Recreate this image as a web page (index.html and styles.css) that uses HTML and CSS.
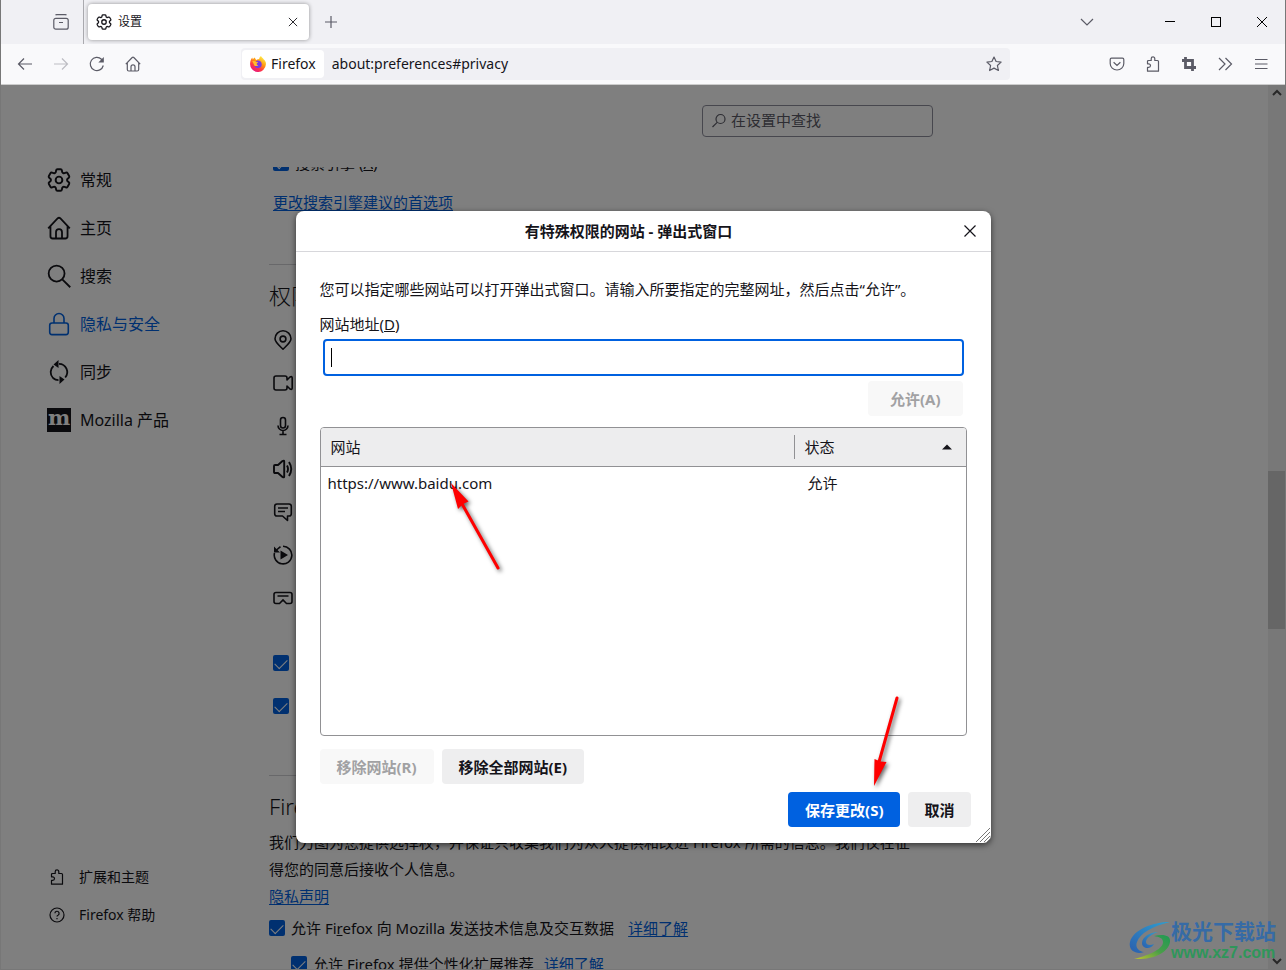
FILE: index.html
```html
<!DOCTYPE html>
<html lang="zh-CN">
<head>
<meta charset="utf-8">
<title>设置</title>
<link rel="stylesheet" href="styles.css">
</head>
<body>
<svg class="defs" aria-hidden="true">
  <symbol id="gear" viewBox="2 2 20 20"><path d="M9.594 3.94c.09-.542.56-.94 1.11-.94h2.593c.55 0 1.02.398 1.11.94l.213 1.281c.063.374.313.686.645.87.074.04.147.083.22.127.325.196.72.257 1.075.124l1.217-.456a1.125 1.125 0 0 1 1.37.49l1.296 2.247a1.125 1.125 0 0 1-.26 1.431l-1.003.827c-.293.241-.438.613-.43.992a7.723 7.723 0 0 1 0 .255c-.008.378.137.75.43.991l1.004.827c.424.35.534.955.26 1.43l-1.298 2.247a1.125 1.125 0 0 1-1.369.491l-1.217-.456c-.355-.133-.75-.072-1.076.124a6.47 6.47 0 0 1-.22.128c-.331.183-.581.495-.644.869l-.213 1.281c-.09.543-.56.94-1.11.94h-2.594c-.55 0-1.019-.398-1.11-.94l-.213-1.281c-.062-.374-.312-.686-.644-.87a6.52 6.52 0 0 1-.22-.127c-.325-.196-.72-.257-1.076-.124l-1.217.456a1.125 1.125 0 0 1-1.369-.49l-1.297-2.247a1.125 1.125 0 0 1 .26-1.431l1.004-.827c.292-.24.437-.613.43-.991a6.932 6.932 0 0 1 0-.255c.007-.38-.138-.751-.43-.992l-1.004-.827a1.125 1.125 0 0 1-.26-1.43l1.297-2.247a1.125 1.125 0 0 1 1.37-.491l1.216.456c.356.133.751.072 1.076-.124.072-.044.146-.086.22-.128.332-.183.582-.495.644-.869l.214-1.28Z" stroke-width="1.6"/><circle cx="12" cy="12" r="2.8" stroke-width="1.6"/></symbol>
  <symbol id="home" viewBox="0 0 16 16"><path d="M.8 8.2 7.2 1.500q.8-.7 1.600 0l6.400 6.700M2.300 7v6.500q0 1.500 1.500 1.500h8.400q1.500 0 1.500-1.500V7M6 15v-4.200a2 2 0 0 1 4 0V15"/></symbol>
  <symbol id="puzzle" viewBox="0 0 16 16"><path d="M2.500 15.200h11V5.500q0-1-1-1H9.800V2.700a1.800 1.800 0 0 0-3.600 0v1.800H3.500q-1 0-1 1v2.300h1.200a1.700 1.700 0 0 1 0 3.600H2.500z" stroke-linejoin="round"/></symbol>
  <symbol id="cross" viewBox="0 0 16 16"><path d="M2.500 2.500l11 11M13.500 2.500l-11 11"/></symbol>
  <symbol id="chev" viewBox="0 0 16 16"><path d="M2 5l6 6 6-6"/></symbol>
</svg>

<header class="titlebar">
  <button class="tool view" aria-label="Firefox View"><svg viewBox="0 0 16 16"><rect x=".8" y="4.300" width="14.400" height="10.900" rx="2"/><path d="M2.600 1.300q.3-.7 1-.7h8.800q.7 0 1 .7M6 8.500h4"/></svg></button>
  <div class="tab"><svg class="ink"><use href="#gear"/></svg><span class="tab-title">设置</span><button class="tab-close ink" aria-label="关闭标签页"><svg><use href="#cross"/></svg></button></div>
  <button class="tool" aria-label="新建标签页"><svg viewBox="0 0 16 16"><path d="M8 2v12M2 8h12"/></svg></button>
  <span class="grow"></span>
  <button class="tool tabs-list" aria-label="列出标签页"><svg><use href="#chev"/></svg></button>
  <button class="win" aria-label="最小化"><svg viewBox="0 0 12 12"><path d="M1 5.500h10"/></svg></button>
  <button class="win" aria-label="最大化"><svg viewBox="0 0 12 12"><rect x="1.500" y="1.500" width="9" height="9"/></svg></button>
  <button class="win" aria-label="关闭"><svg viewBox="0 0 12 12"><path d="M1 1l10 10M11 1L1 11"/></svg></button>
</header>

<nav class="toolbar">
  <button class="tool" aria-label="后退"><svg viewBox="0 0 16 16"><path d="M15 8H1.500M7 2.500L1.500 8 7 13.500"/></svg></button>
  <button class="tool" aria-label="前进" disabled><svg viewBox="0 0 16 16"><path d="M1 8h13.500M9 2.500L14.500 8 9 13.500"/></svg></button>
  <button class="tool" aria-label="刷新"><svg viewBox="0 0 16 16"><path d="M14.300 9.500A6.600 6.600 0 1 1 12.500 3.200L14 4.700"/><path class="fill" d="M14.800 1v5.500H9.300z"/></svg></button>
  <button class="tool" aria-label="主页"><svg><use href="#home"/></svg></button>
  <div class="urlbar">
    <span class="identity"><svg viewBox="0 0 16 16">
      <defs><linearGradient id="fox" x1=".85" y1=".05" x2=".25" y2="1"><stop offset="0" stop-color="#fff44f"/><stop offset=".4" stop-color="#ff980e"/><stop offset=".7" stop-color="#ff3647"/><stop offset="1" stop-color="#e31587"/></linearGradient></defs>
      <path fill="url(#fox)" stroke="none" d="M15.400 5.500c-.4-.9-1-1.700-1.600-2.100-.8-1.300-2.200-1.900-2.800-3.400-1.500.9-1.900 2.300-1.800 3.100-1 0-2 .3-2.800.9C5.500 3.400 5 2.500 5 1.600 4 2 3.300 2.900 2.900 3.400 2.500 3 2.400 1.900 2.500 1.500 1 2.500.2 5.300.1 7.600a7.900 7.900 0 0 0 15.800 1c.1-1.100 0-2.200-.5-3.100z"/>
      <path fill="#7b3ae0" stroke="none" d="M8 4.500a3.800 3.800 0 1 1-3.700 5c1.700 1 3 .1 4-.6-1.800 0-2-.7-1.500-1.500-.8-.1-1-.8-.8-1.500C6.500 5 7.300 4.500 8 4.500z"/>
      <path fill="#ffbd2e" stroke="none" d="M2 5.500c1.500-1 3-.7 4.200.4l1.900.3c0 .7-1.300 1.200-1.300 1.200-.5.800.2 1.500 1.500 1.500-1.400 1.600-3 1.400-4 .6C3.800 8.200 3.500 6.500 2 5.500z"/></svg>Firefox</span>
    <input class="url" aria-label="地址" value="about:preferences#privacy">
    <button class="star" aria-label="添加书签"><svg viewBox="0 0 16 16"><path stroke-linejoin="round" d="M8 1l2.100 4.500 5 .6-3.700 3.400 1 5L8 12.100l-4.400 2.400 1-5L.9 6.100l5-.6z"/></svg></button>
  </div>
  <button class="tool" aria-label="Pocket"><svg viewBox="0 0 16 16"><path d="M2.500 2.200h11q1.300 0 1.300 1.300v4a6.800 6.500 0 0 1-13.600 0v-4q0-1.300 1.300-1.300zM4.600 6.300L8 9.500l3.400-3.200"/></svg></button>
  <button class="tool" aria-label="扩展"><svg><use href="#puzzle"/></svg></button>
  <button class="tool" aria-label="截图"><svg viewBox="0 0 16 16"><path stroke-width="2.800" d="M4.500 1v10.500H15M1 4.500h10.500V15"/></svg></button>
  <button class="tool" aria-label="更多工具"><svg viewBox="0 0 16 16"><path d="M2 2l6 6-6 6M8.500 2l6 6-6 6"/></svg></button>
  <button class="tool" aria-label="菜单"><svg viewBox="0 0 16 16"><path d="M2 3.500h12.500M2 8h12.500M2 12.500h12.500"/></svg></button>
</nav>

<div class="page">
  <aside class="sidebar">
    <a href="#general"><svg><use href="#gear"/></svg>常规</a>
    <a href="#home-page"><svg><use href="#home"/></svg>主页</a>
    <a href="#search"><svg viewBox="0 0 16 16"><circle cx="6.400" cy="6.400" r="5.300"/><path d="M10.200 10.200l5.300 5.300"/></svg>搜索</a>
    <a href="#privacy" class="active"><svg viewBox="0 0 24 24"><path stroke-width="1.600" d="M7 11V6.500a5 5 0 0 1 10 0V11M5 11h14q2.300 0 2.300 2.300v7q0 2.300-2.300 2.300H5q-2.300 0-2.300-2.300v-7Q2.700 11 5 11z"/></svg>隐私与安全</a>
    <a href="#sync"><svg viewBox="0 0 24 24"><path stroke-width="1.800" d="M6 18A8.300 8.300 0 0 1 6.500 6M12 3.800a8.300 8.300 0 0 1 6.200 13.700M11.500 20.200A8.300 8.300 0 0 1 6 18"/><path class="fill" d="M11.500 0v8L6.500 4.500zM12.500 24v-8l5 3.500z"/></svg>同步</a>
    <a href="#more"><span class="moz">m</span>Mozilla 产品</a>
    <span class="grow"></span>
    <a href="#addons" class="small"><svg><use href="#puzzle"/></svg>扩展和主题</a>
    <a href="#help" class="small"><svg viewBox="0 0 16 16"><circle cx="8" cy="8" r="7"/><path d="M5.900 6.300a2.100 2.100 0 1 1 3.100 1.900q-1 .5-1 1.400M8 11v1.300"/></svg>Firefox 帮助</a>
  </aside>
  <main class="main">
    <div class="searchrow"><label class="search"><svg viewBox="0 0 16 16"><circle cx="9.500" cy="6" r="4.500"/><path d="M6.200 9.300L1.500 14"/></svg><input aria-label="在设置中查找" placeholder="在设置中查找"></label></div>
    <div class="pane">
      <label class="check clipped"><input type="checkbox" checked><span>搜索引擎 (<u>A</u>)</span></label>
      <a class="link engines" href="#search">更改搜索引擎建议的首选项</a>
      <h2>权限</h2>
      <ul class="perms">
        <li><svg viewBox="0 0 20 20"><path d="M10 19.200C6.500 15.800 2 12.300 2 8.800a8 8 0 0 1 16 0c0 3.500-4.500 7-8 10.400z"/><circle cx="10" cy="9" r="2.900"/></svg></li>
        <li><svg viewBox="0 0 20 20"><path stroke-linejoin="round" d="M3 3h9q2 0 2 2v2l3-3q2.200-1 2.200 1v10q0 2-2.200 1l-3-3v2q0 2-2 2H3q-2 0-2-2V5q0-2 2-2z"/></svg></li>
        <li><svg viewBox="0 0 20 20"><rect x="7.500" y="1.500" width="5" height="10.500" rx="2.500"/><path d="M5 9.500a5 5 0 0 0 10 0M10 14.500v4M6.500 18.500h7"/></svg></li>
        <li><svg viewBox="0 0 20 20"><path stroke-width="1.900" stroke-linejoin="round" d="M1 7q0-1 1-1h3l4.500-4q1.700-1 1.700.5v15q0 1.500-1.700.5L5 14H2q-1 0-1-1zM14 6.500q2 3.500 0 7M16 3q4.500 7 0 14"/></svg></li>
        <li><svg viewBox="0 0 20 20"><path stroke-linejoin="round" d="M4 2h12q2.300 0 2.300 2.300v7.400q0 2.300-2.300 2.300h-1.500v4.500L9.500 14H4q-2.300 0-2.300-2.300V4.300Q1.700 2 4 2zM5 6h10M5 9.500h7"/></svg></li>
        <li><svg viewBox="0 0 20 20"><path d="M10 1.300A8.800 8.800 0 1 1 1.500 8M7.500 1.700L3.500 5"/><path class="fill" d="M7.500 5.500v9l7.500-4.500zM1 1.500v6h6z"/></svg></li>
        <li><svg viewBox="0 0 20 20"><path d="M3 4.500h14q2 0 2 2v7q0 2-2 2h-3.500L10 12l-3.500 3.500H3q-2 0-2-2v-7q0-2 2-2zM4.500 8h11"/></svg></li>
      </ul>
      <div class="checks"><input type="checkbox" checked aria-label="阻止弹出式窗口"><input type="checkbox" checked aria-label="安装附加组件时警告"></div>
      <h2>Firefox 数据收集与使用</h2>
      <p class="copy">我们力图为您提供选择权，并保证只收集我们为众人提供和改进 Firefox 所需的信息。我们仅在征得您的同意后接收个人信息。</p>
      <a class="link notice" href="#privacy-notice">隐私声明</a>
      <div class="optrow"><label class="check"><input type="checkbox" checked><span>允许 Fi<u>r</u>efox 向 Mozilla 发送技术信息及交互数据</span></label><a class="link" href="#telemetry">详细了解</a></div>
      <div class="optrow sub"><label class="check"><input type="checkbox" checked><span>允许 Firefox 提供个性化扩展推荐</span></label><a class="link" href="#addons-rec">详细了解</a></div>
    </div>
  </main>
  <div class="scrollbar"><svg viewBox="0 0 16 16"><path d="M4 10l4-4 4 4"/></svg><span class="thumb"></span><svg viewBox="0 0 16 16"><path d="M4 6l4 4 4-4"/></svg></div>

  <div class="overlay">
    <section class="dialog" role="dialog" aria-labelledby="dlg-title">
      <header><h1 id="dlg-title">有特殊权限的网站 - 弹出式窗口</h1><button class="close ink" aria-label="关闭"><svg><use href="#cross"/></svg></button></header>
      <div class="body">
        <p>您可以指定哪些网站可以打开弹出式窗口。请输入所要指定的完整网址，然后点击“允许”。</p>
        <label for="site">网站地址(<u>D</u>)</label>
        <div class="field"><input id="site" type="text"><span class="caret"></span></div>
        <div class="allow"><button class="btn" disabled>允许(A)</button></div>
        <div class="list"><table>
          <thead><tr><th class="site">网站</th><th><div class="sort">状态<svg viewBox="0 0 10 6"><path class="fill" d="M5 0.500l5 5H0z"/></svg></div></th></tr></thead>
          <tbody><tr><td>https://www.baidu.com</td><td class="status">允许</td></tr></tbody>
        </table></div>
        <div class="row"><button class="btn" disabled>移除网站(R)</button><button class="btn">移除全部网站(E)</button></div>
      </div>
      <footer><button class="btn primary">保存更改(S)</button><button class="btn cancel">取消</button></footer>
      <svg class="grip" viewBox="0 0 16 16"><path d="M1 15L15 1M5 15L15 5M9 15l6-6M12 15l3-3"/></svg>
      <svg class="arrows" viewBox="0 0 695 632"><g fill="#fe0000" stroke="#fe0000"><path stroke="none" d="M155 272l17.500 18.500-5.500 2.500-5 5zM578 575l.500-27 6 2.500 6 .5z"/><path stroke-width="3" stroke-linecap="round" d="M165 291l37 66M583 551l18-64"/></g></svg>
    </section>
  </div>
  <div class="watermark">
    <svg viewBox="0 0 42 40"><defs><linearGradient id="wb" x1="1" y1="0" x2="0" y2="1"><stop offset="0" stop-color="#2f9fd0"/><stop offset="1" stop-color="#2b5fae"/></linearGradient><linearGradient id="wg" x1="1" y1="0" x2="0" y2="1"><stop offset="0" stop-color="#1e9a54"/><stop offset=".5" stop-color="#4a9e48"/><stop offset="1" stop-color="#c3c42c"/></linearGradient></defs>
    <path fill="url(#wb)" d="M41 1C23 1 4 9 1 21c-2 8 6 13 14 10-6-1-9-5-7-10C11 12 24 5 41 1z"/><path fill="url(#wb)" d="M29 11c-8 0-16 5-16 11 0 6 9 7 12 1-4 2-8 1-8-2 0-4 6-8 12-10z"/><path fill="url(#wg)" d="M25 15c9-2 17-1 16 6C39 32 24 39 5 38c12-3 29-9 29-17 0-4-4-5-9-6z"/></svg>
    <div><strong>极光下载站</strong><span>www.xz7.com</span></div>
  </div>
</div>
</body>
</html>
```
FILE: styles.css
```css
* { box-sizing: border-box; }
body {
  margin: 0;
  height: 100vh;
  display: flex;
  flex-direction: column;
  overflow: hidden;
  border: 1px solid #777;
  border-top: 0;
  font: 15px/20px "Noto Sans", "Noto Sans CJK SC", sans-serif;
  color: #15141a;
}
svg { width: 16px; height: 16px; flex: none; fill: none; stroke: currentColor; stroke-width: 1.2; display: block; }
svg .fill { fill: currentColor; stroke: none; }
.defs { position: absolute; width: 0; height: 0; }
button, input { font: inherit; color: inherit; }
button { border: 0; padding: 0; background: none; }
.grow { flex: 1; }
.ink { color: #15141a; }

.titlebar { display: flex; align-items: center; height: 44px; background: #f0f0f4; flex: none; }
.tool { width: 36px; height: 32px; display: grid; place-items: center; color: #5b5b66; flex: none; }
.tool:disabled { color: #bdbdc3; }
.view { width: 83px; height: 44px; padding-left: 37px; border-right: 1px solid #aaaaaf; }
.tab { display: flex; align-items: center; gap: 6px; width: 221px; height: 36px; margin: 0 4px; padding: 0 8px; background: #fff; border-radius: 4px; box-shadow: 0 0 4px #00000066; font-size: 12px; }
.tab-title { flex: 1; }
.tab-close { width: 16px; height: 16px; display: grid; place-items: center; }
.tab-close svg { width: 12px; height: 12px; }
.tabs-list { margin-right: 42px; }
.win { width: 46px; height: 44px; display: grid; place-items: center; color: #000; }
.win svg { width: 12px; height: 12px; stroke-width: 1; }

.toolbar { display: flex; align-items: center; height: 41px; padding: 0 6px; background: #f9f9fb; border-bottom: 1px solid #ccc; flex: none; font-size: 14px; }
.urlbar { flex: 1; display: flex; align-items: center; height: 32px; margin: 0 89px 0 90px; padding: 0 8px 0 1px; background: #f0f0f4; border-radius: 4px; }
.identity { display: flex; align-items: center; gap: 5px; height: 28px; padding: 0 8px; background: #fff; border-radius: 4px; }
.url { flex: 1; min-width: 0; border: 0; background: none; padding: 0 8px; outline: 0; }
.star { color: #5b5b66; }

.page { flex: 1; min-height: 0; display: flex; position: relative; overflow: hidden; background: #fff; }
.sidebar { width: 268px; flex: none; display: flex; flex-direction: column; padding: 71px 0 35px 46px; }
.sidebar a { display: flex; align-items: center; gap: 9px; height: 48px; font-size: 16px; color: inherit; text-decoration: none; }
.sidebar svg { width: 24px; height: 24px; }
.sidebar .active { color: #0061e0; }
.sidebar .small { height: 38px; padding-left: 2px; gap: 14px; font-size: 14px; }
.sidebar .small svg { width: 16px; height: 16px; }
.moz { width: 24px; height: 24px; background: #15141a; color: #fff; font: bold 21px/20px "DejaVu Serif", serif; text-align: center; }

.main { flex: 1; max-width: 664px; display: flex; flex-direction: column; min-width: 0; }
.searchrow { display: flex; justify-content: flex-end; padding: 20px 0 30px; }
.search { display: flex; align-items: center; gap: 4px; width: 231px; height: 32px; padding: 0 8px; border: 1px solid #8f8f9d; border-radius: 4px; color: #5b5b66; }
.search input { border: 0; outline: 0; background: none; min-width: 0; padding: 0 0 2px; }
.search input::placeholder { color: #5b5b66; opacity: 1; }
.pane { flex: 1; min-height: 0; overflow: hidden; }
.check { display: flex; align-items: center; gap: 6px; }
input[type="checkbox"] { appearance: none; width: 16px; height: 16px; margin: 0; flex: none; border-radius: 2px; background: #0061e0; display: grid; place-items: center; }
input[type="checkbox"]::before { content: ""; width: 11px; height: 6px; border: solid #fff; border-width: 0 0 1px 1px; transform: translateY(-1px) rotate(-45deg); }
.clipped { margin: -14px 0 0 4px; height: 20px; }
.link { color: #0061e0; text-decoration: underline; text-underline-offset: 2px; }
.engines { display: block; margin: 19px 0 52px 4px; }
h2 { margin: 0; padding-top: 15px; border-top: 1px solid #d0d0d4; font: 300 22px/30px "Noto Sans", "Noto Sans CJK SC", sans-serif; }
.perms { list-style: none; margin: 8px 0 0 4px; padding: 0; }
.perms li { height: 43px; display: flex; align-items: center; }
.perms svg { width: 20px; height: 20px; stroke-width: 1.6; }
.checks { display: flex; flex-direction: column; gap: 27px; padding: 36px 0 61px 4px; }
.copy { margin: 8px 0 0; line-height: 27px; max-width: 644px; }
.notice { line-height: 27px; }
.optrow { display: flex; align-items: center; gap: 14px; height: 36px; }
.sub { padding-left: 22px; gap: 10px; }

.scrollbar { width: 17px; margin-left: auto; display: flex; flex-direction: column; align-items: center; background: #f0f0f0; color: #505050; }
.scrollbar svg { stroke-width: 2; }
.thumb { width: 17px; height: 158px; margin: 370px 0 auto; background: #cdcdcd; }

.overlay { position: absolute; inset: 0; display: grid; place-items: center; background: #00000080; }
.dialog { position: relative; width: 695px; max-width: 100%; background: #fff; border-radius: 8px; box-shadow: 0 2px 6px #00000099; }
.dialog header { display: flex; align-items: center; height: 41px; padding-right: 13px; border-bottom: 1px solid #d7d7db; }
h1 { flex: 1; margin: 0; font-size: 15px; line-height: 20px; font-weight: 700; text-align: center; }
.close { width: 16px; height: 16px; }
.body { padding: 27px 24px 0; }
.body p { margin: 0 0 15px; }
.body label { display: block; }
.field { position: relative; margin: 5px 3px; }
.field input { display: block; width: 100%; height: 37px; border: 2px solid #0061e0; border-radius: 4px; padding: 0 8px; outline: 0; }
.caret { position: absolute; left: 8px; top: 9px; width: 1px; height: 19px; background: #000; }
.allow { display: flex; justify-content: flex-end; padding: 0 4px 11px; }
.btn { height: 35px; padding: 0 17px; border-radius: 4px; background: #eeeeef; font-weight: 700; }
.allow .btn { padding: 0 22px; }
.btn:disabled { background: #f8f8f8; color: #a1a1a3; }
.primary { background: #0061e0; color: #fff; }
.cancel { padding: 0 16px; }
.list { height: 309px; border: 1px solid #919194; border-radius: 4px; overflow: hidden; }
table { width: 100%; border-collapse: collapse; text-align: left; }
th { height: 38px; padding: 0; background: #ededee; border-bottom: 1px solid #919194; font-weight: 400; }
.site { width: 473px; padding-left: 10px; }
.sort { display: flex; align-items: center; justify-content: space-between; height: 24px; padding: 0 14px 0 10px; border-left: 1px solid #919194; }
.sort svg { width: 10px; height: 6px; }
td { height: 34px; padding: 0 7px; }
.status { padding-left: 14px; }
.row { display: flex; gap: 8px; padding-top: 13px; }
.dialog footer { display: flex; justify-content: flex-end; gap: 8px; padding: 8px 20px 16px; }
.grip { position: absolute; right: 0; bottom: 0; color: #777; stroke-width: 1; }
.arrows { position: absolute; inset: 0; width: 100%; height: 100%; pointer-events: none; filter: drop-shadow(2px 2px 2px #00000099); }

.watermark { position: absolute; right: 9px; bottom: 6px; display: flex; align-items: center; }
.watermark svg { width: 42px; height: 40px; stroke: none; }
.watermark strong, .watermark span { display: block; }
.watermark strong { font-size: 21px; line-height: 24px; color: #366ba6; }
.watermark span { font: 700 16px/20px "Liberation Sans", sans-serif; color: #2f965a; }
```
